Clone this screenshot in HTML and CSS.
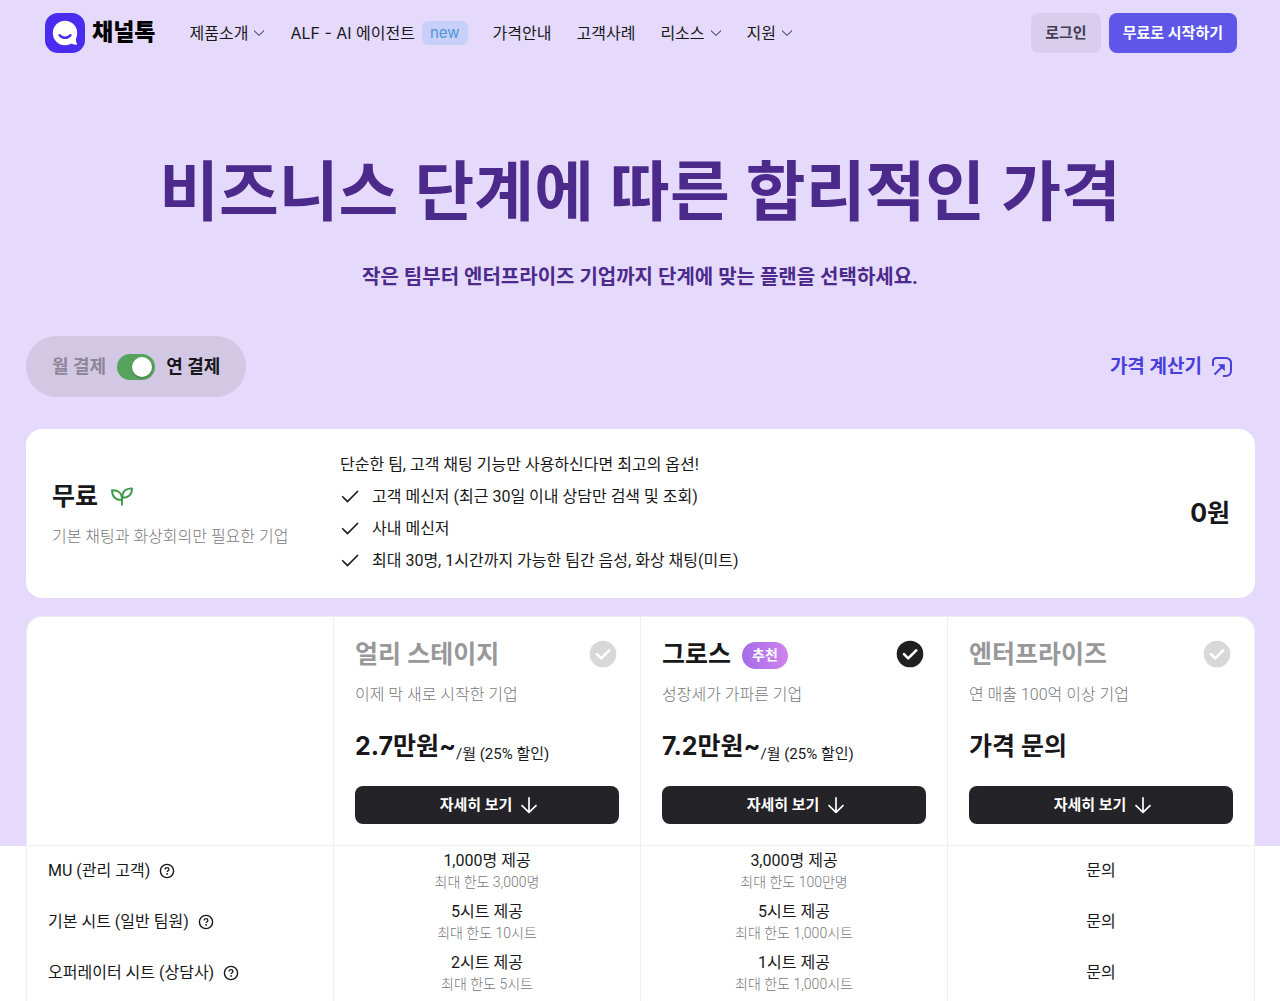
FILE: index.html
```html
<!DOCTYPE html>
<html lang="ko">
<head>
<meta charset="utf-8">
<meta name="viewport" content="width=device-width, initial-scale=1">
<title>채널톡 가격안내</title>
<link rel="stylesheet" href="styles.css">
</head>
<body>
<svg class="sprite" aria-hidden="true">
  <symbol id="chevron" viewBox="0 0 12 12"><path d="M1 3.600 6 8.400l5-4.800" fill="none" stroke="currentColor" stroke-width="1"/></symbol>
  <symbol id="check" viewBox="0 0 20 20"><path d="M2.2 9.300 7.500 14.600 18 4" fill="none" stroke="currentColor" stroke-width="1.600"/></symbol>
  <symbol id="badge-check" viewBox="0 0 28 28"><circle cx="14" cy="14" r="13.300" fill="currentColor"/><path d="m8 14.200 4.200 4.200 8-8" fill="none" stroke="#fff" stroke-width="2.600" stroke-linecap="round" stroke-linejoin="round"/></symbol>
  <symbol id="arrow-down" viewBox="0 0 20 20"><path d="M10 2.300v15M2.500 10.200l7.500 7.200 7.500-7.200" fill="none" stroke="currentColor" stroke-width="1.700" stroke-linejoin="round"/></symbol>
  <symbol id="help" viewBox="0 0 16 16"><circle cx="8" cy="8" r="6.600" fill="none" stroke="currentColor" stroke-width="1.400"/><path d="M6.100 6.600c0-1.200.8-1.900 1.900-1.900s1.900.7 1.900 1.700c0 1.300-1.800 1.300-1.800 2.600" fill="none" stroke="currentColor" stroke-width="1.300"/><circle cx="8.100" cy="10.900" r=".9" fill="currentColor"/></symbol>
</svg>
<div class="hero">
  <header class="topbar">
    <a class="logo" href="#">
      <svg class="logo-mark" viewBox="0 0 40 40" aria-hidden="true">
        <rect width="40" height="40" rx="13" fill="#4a2cf0"/>
        <path d="M20 7.800A12.200 12.200 0 1 0 20 32.200C22.800 32.200 24.600 31.700 26.300 30.600C27.900 31.600 29.800 31.900 31.600 31.500C32.200 31.300 32.300 30.900 31.900 30.400C31.100 29.300 30.800 27.700 31 25.600C31.800 23.900 32.200 22 32.200 20A12.200 12.200 0 0 0 20 7.800Z" fill="#fff"/>
        <path d="M14.600 22.200c2.800 3.500 8 3.500 10.800 0" fill="none" stroke="#4a2cf0" stroke-width="2.500" stroke-linecap="round"/>
      </svg>
      <span>채널톡</span>
    </a>
    <nav class="menu">
      <a href="#">제품소개 <svg class="i12"><use href="#chevron"/></svg></a>
      <a href="#">ALF - AI 에이전트 <span class="new">new</span></a>
      <a href="#">가격안내</a>
      <a href="#">고객사례</a>
      <a href="#">리소스 <svg class="i12"><use href="#chevron"/></svg></a>
      <a href="#">지원 <svg class="i12"><use href="#chevron"/></svg></a>
    </nav>
    <div class="account">
      <button class="btn btn-login" type="button">로그인</button>
      <button class="btn btn-start" type="button">무료로 시작하기</button>
    </div>
  </header>

  <div class="intro">
    <h1>비즈니스 단계에 따른 합리적인 가격</h1>
    <p>작은 팀부터 엔터프라이즈 기업까지 단계에 맞는 플랜을 선택하세요.</p>
  </div>

  <div class="wrap">
    <div class="billing">
      <label class="period"><span class="off">월 결제</span><input type="checkbox" role="switch" checked><span>연 결제</span></label>
      <a class="calc" href="#">가격 계산기
        <svg class="i22" viewBox="0 0 22 22" aria-hidden="true"><g fill="none" stroke="currentColor" stroke-width="2"><path d="M2 10V5.500Q2 2 5.500 2H14.500Q20 2 20 7.500V14.500Q20 20 14.500 20H12"/><path d="m3.500 18.500 8-8"/></g><path d="M6.800 8.200h7v7z" fill="currentColor"/></svg>
      </a>
    </div>

    <section class="free">
      <div class="free-name">
        <h2>무료 <svg class="i24" viewBox="0 0 24 24" aria-hidden="true"><g fill="none" stroke="#3f9a4b" stroke-width="1.900" stroke-linejoin="round"><path d="M12 15C5.500 15.200 2.200 12 2 5.200C8.500 5 12 8 12 15Z"/><path d="M12.200 12.800C12.200 6.500 15.500 3.400 22 3.400C22 9.800 18.500 12.900 12.200 12.800Z"/><path d="M12 11v9.500"/></g></svg></h2>
        <p class="desc">기본 채팅과 화상회의만 필요한 기업</p>
      </div>
      <div class="free-info">
        <p>단순한 팀, 고객 채팅 기능만 사용하신다면 최고의 옵션!</p>
        <ul>
          <li><svg class="i20"><use href="#check"/></svg>고객 메신저 (최근 30일 이내 상담만 검색 및 조회)</li>
          <li><svg class="i20"><use href="#check"/></svg>사내 메신저</li>
          <li><svg class="i20"><use href="#check"/></svg>최대 30명, 1시간까지 가능한 팀간 음성, 화상 채팅(미트)</li>
        </ul>
      </div>
      <strong class="free-price">0원</strong>
    </section>

    <section class="plans">
      <div class="plan"></div>
      <article class="plan">
        <div class="plan-top muted"><h2>얼리 스테이지</h2><svg class="i28"><use href="#badge-check"/></svg></div>
        <p class="desc">이제 막 새로 시작한 기업</p>
        <p class="price">2.7만원~<small>/월 (25% 할인)</small></p>
        <button class="more" type="button">자세히 보기 <svg class="i20"><use href="#arrow-down"/></svg></button>
      </article>
      <article class="plan">
        <div class="plan-top"><h2>그로스</h2><span class="pick">추천</span><svg class="i28"><use href="#badge-check"/></svg></div>
        <p class="desc">성장세가 가파른 기업</p>
        <p class="price">7.2만원~<small>/월 (25% 할인)</small></p>
        <button class="more" type="button">자세히 보기 <svg class="i20"><use href="#arrow-down"/></svg></button>
      </article>
      <article class="plan">
        <div class="plan-top muted"><h2>엔터프라이즈</h2><svg class="i28"><use href="#badge-check"/></svg></div>
        <p class="desc">연 매출 100억 이상 기업</p>
        <p class="price">가격 문의</p>
        <button class="more" type="button">자세히 보기 <svg class="i20"><use href="#arrow-down"/></svg></button>
      </article>
    </section>
  </div>
</div>

<div class="wrap">
  <table class="compare">
    <tbody>
      <tr><th scope="row"><span class="feature">MU (관리 고객) <svg class="i16"><use href="#help"/></svg></span></th><td>1,000명 제공<small>최대 한도 3,000명</small></td><td>3,000명 제공<small>최대 한도 100만명</small></td><td>문의</td></tr>
      <tr><th scope="row"><span class="feature">기본 시트 (일반 팀원) <svg class="i16"><use href="#help"/></svg></span></th><td>5시트 제공<small>최대 한도 10시트</small></td><td>5시트 제공<small>최대 한도 1,000시트</small></td><td>문의</td></tr>
      <tr><th scope="row"><span class="feature">오퍼레이터 시트 (상담사) <svg class="i16"><use href="#help"/></svg></span></th><td>2시트 제공<small>최대 한도 5시트</small></td><td>1시트 제공<small>최대 한도 1,000시트</small></td><td>문의</td></tr>
    </tbody>
  </table>
</div>
</body>
</html>
```
FILE: styles.css
```css
* { box-sizing: border-box; }

body {
  margin: 0;
  font: 400 16px/24px "Roboto", "Noto Sans CJK KR", sans-serif;
  color: #18181b;
  background: #fff;
}

h1, h2, p, ul { margin: 0; padding: 0; }
a { color: inherit; text-decoration: none; }
button { font: inherit; border: 0; cursor: pointer; }
svg { flex: none; }

.sprite { display: none; }
.i12 { width: 12px; height: 12px; }
.i16 { width: 16px; height: 16px; }
.i20 { width: 20px; height: 20px; }
.i22 { width: 22px; height: 22px; }
.i24 { width: 24px; height: 24px; }
.i28 { width: 28px; height: 28px; }

.hero { background: #e5dafb; }
.wrap { padding: 0 25px 0 26px; }

/* top bar */
.topbar {
  display: flex;
  align-items: center;
  height: 65px;
  padding: 0 43px 0 45px;
}
.logo {
  display: flex;
  align-items: center;
  gap: 7px;
  margin-right: 34px;
  font-size: 23px;
  font-weight: 900;
  color: #000;
}
.logo-mark { width: 40px; height: 40px; }
.menu {
  display: flex;
  align-items: center;
  gap: 25px;
  font-family: "Inter", "Noto Sans CJK KR", sans-serif;
  white-space: nowrap;
}
.menu a { display: flex; align-items: center; gap: 5px; }
.new {
  margin-left: 2px;
  padding: 0 8px;
  border-radius: 6px;
  background: #c7d0f8;
  color: #4b97d8;
  font-size: 15px;
}
.account { display: flex; gap: 8px; margin-left: auto; }
.btn {
  height: 40px;
  padding: 0 14px;
  border-radius: 8px;
  font-size: 15px;
  font-weight: 700;
  white-space: nowrap;
}
.btn-login { background: #d8cdec; color: #423c4c; }
.btn-start { background: #5e56e8; color: #fff; }

/* intro */
.intro { padding: 80px 26px 47px; text-align: center; color: #4c2a8c; }
.intro h1 { font-size: 65px; line-height: 96px; font-weight: 700; }
.intro p { margin-top: 24px; font-size: 20px; font-weight: 700; }

/* billing */
.billing { display: flex; align-items: center; justify-content: space-between; }
.period {
  display: flex;
  align-items: center;
  gap: 11px;
  height: 61px;
  padding: 0 26px;
  border-radius: 31px;
  background: #d3c8e3;
  font-size: 18px;
  font-weight: 700;
}
.period .off { color: #8d8598; }
.period input {
  appearance: none;
  display: flex;
  justify-content: flex-end;
  align-items: center;
  width: 38px;
  height: 26px;
  margin: 0;
  padding: 3px;
  border-radius: 13px;
  background: #55a35c;
}
.period input::before {
  content: "";
  width: 20px;
  height: 20px;
  border-radius: 50%;
  background: #fff;
  box-shadow: 0 1px 2px #0004;
}
.calc {
  display: flex;
  align-items: center;
  gap: 9px;
  padding-right: 22px;
  font-size: 19px;
  font-weight: 700;
  color: #473fdb;
}

/* free plan */
.free {
  display: grid;
  grid-template-columns: 288px 1fr auto;
  align-items: center;
  margin-top: 32px;
  padding: 20px 25px 21px 26px;
  border-radius: 16px;
  background: #fff;
}
h2 { font-size: 25px; line-height: 32px; font-weight: 700; }
.free-name { padding-top: 3px; }
.free h2 { display: flex; align-items: center; gap: 12px; }
.desc { font-weight: 300; color: #77777b; }
.desc, .free .desc { margin-top: 12px; }
.free-info { line-height: 32px; }
.free-info ul { list-style: none; }
.free-info li { display: flex; align-items: center; gap: 12px; }
.free-price, .price {
  font-family: "Inter", "Noto Sans CJK KR", sans-serif;
  font-size: 25px;
  line-height: 32px;
  font-weight: 700;
}

/* plan cards */
.plans {
  display: grid;
  grid-template-columns: repeat(4, 1fr);
  margin-top: 18px;
  border: 1px solid #eee;
  border-right: 0;
  border-radius: 16px 16px 0 0;
  background: #fff;
}
.plan { padding: 22px 21px 21px; border-right: 1px solid #eee; }
.plan:last-child { border-radius: 0 16px 0 0; }
.plan-top { display: flex; align-items: center; gap: 11px; }
.plan-top svg { margin: 0 2px 2px auto; color: #202022; }
.plan-top.muted h2 { color: #98989a; }
.plan-top.muted svg { color: #d8d8d8; }
.pick {
  padding: 0 10px;
  border-radius: 14px;
  background: linear-gradient(90deg, #a56de8, #cf82ee);
  color: #fff;
  font-size: 14px;
  line-height: 27px;
  font-weight: 700;
}
.price { display: flex; align-items: flex-end; margin: 23px 0 24px; }
.price small {
  font-family: "Roboto", "Noto Sans CJK KR", sans-serif;
  font-size: 15px;
  line-height: 16px;
  font-weight: 400;
}
.more {
  display: flex;
  align-items: center;
  justify-content: center;
  gap: 7px;
  width: 100%;
  height: 38px;
  padding: 0 0 0 5px;
  border-radius: 8px;
  background: #242328;
  color: #fff;
  font-size: 15px;
  font-weight: 700;
}

/* comparison table */
.compare {
  width: 100%;
  table-layout: fixed;
  border-collapse: separate;
  border-spacing: 0;
  border-left: 1px solid #eee;
  text-align: center;
}
.compare th, .compare td {
  height: 51px;
  padding: 0 0 2px;
  border-right: 1px solid #eee;
  font-weight: 400;
  line-height: 22px;
}
.compare th { padding-left: 21px; text-align: left; }
.compare tr:last-child > * { height: 53px; padding-bottom: 4px; }
.feature { display: flex; align-items: center; gap: 9px; }
.compare small { display: block; font-size: 14px; line-height: 20px; font-weight: 300; color: #77777b; }
```
